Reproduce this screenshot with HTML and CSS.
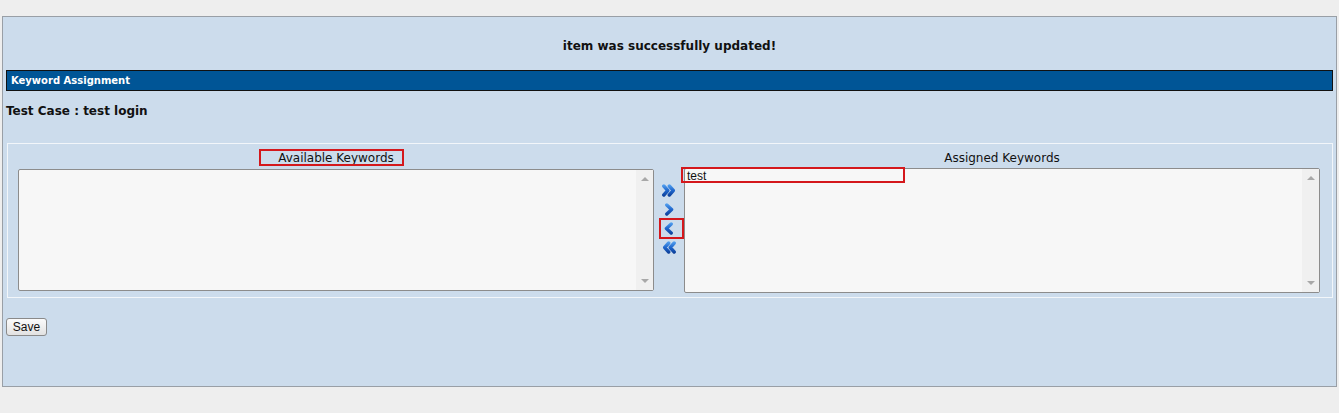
FILE: index.html
```html
<!DOCTYPE html>
<html>
<head>
<meta charset="utf-8">
<link rel="stylesheet" href="styles.css">
</head>
<body>
<div class="page">
  <div class="message">item was successfully updated!</div>
  <div class="bar">Keyword Assignment</div>
  <div class="tc">Test Case : test login</div>
  <div class="box">
    <div class="labels">
      <div class="lab lab-left">Available Keywords<span class="mark mark-label"></span></div>
      <div class="lab-gap"></div>
      <div class="lab">Assigned Keywords</div>
    </div>
    <div class="row">
      <div class="sel sel-left">
        <div class="opts"></div>
        <div class="sb"><span class="up"></span><span class="dn"></span></div>
      </div>
      <div class="arrows">
        <svg class="ar" width="16" height="13" viewBox="0 0 16 13"><defs><linearGradient id="g1" x1="0" y1="0" x2="0" y2="13" gradientUnits="userSpaceOnUse"><stop offset="0" stop-color="#5aa8f4"/><stop offset="0.5" stop-color="#1f66cc"/><stop offset="1" stop-color="#0a3a92"/></linearGradient></defs><path d="M2.8 2 L6.8 6.5 L2.8 11 M8.3 2 L12.3 6.5 L8.3 11" fill="none" stroke="url(#g1)" stroke-width="3.4" stroke-linejoin="round" stroke-linecap="round"/></svg>
        <svg class="ar" width="16" height="13" viewBox="0 0 16 13"><path d="M5.8 2 L10.6 6.5 L5.8 11" fill="none" stroke="url(#g1)" stroke-width="3.4" stroke-linejoin="round" stroke-linecap="round"/></svg>
        <div class="arbox"><svg class="ar" width="16" height="13" viewBox="0 0 16 13"><path d="M10.2 2 L5.4 6.5 L10.2 11" fill="none" stroke="url(#g1)" stroke-width="3.4" stroke-linejoin="round" stroke-linecap="round"/></svg><span class="mark mark-arrow"></span></div>
        <svg class="ar" width="16" height="13" viewBox="0 0 16 13"><path d="M13.2 2 L9.2 6.5 L13.2 11 M7.7 2 L3.7 6.5 L7.7 11" fill="none" stroke="url(#g1)" stroke-width="3.4" stroke-linejoin="round" stroke-linecap="round"/></svg>
      </div>
      <div class="sel sel-right">
        <div class="opts"><div class="opt">test</div></div>
        <div class="sb"><span class="up"></span><span class="dn"></span></div>
        <span class="mark mark-opt"></span>
      </div>
    </div>
  </div>
  <div class="actions"><button class="btn">Save</button></div>
</div>
</body>
</html>
```

FILE: styles.css
```css
html, body {
  margin: 0;
  padding: 0;
  background: #eeeeee;
}
.page {
  margin: 16px 2px 0 2px;
  width: 1333px;
  height: 369px;
  background: #ccdcec;
  border: 1px solid #999fa6;
  font-family: "DejaVu Sans", Verdana, sans-serif;
  color: #111;
}
.message {
  text-align: center;
  font-weight: bold;
  font-size: 12px;
  padding-top: 22px;
  height: 31px;
  line-height: 15px;
}
.bar {
  margin: 0 3px;
  height: 19px;
  border: 1px solid #111;
  background: #005596;
  color: #fff;
  font-weight: bold;
  font-size: 10px;
  line-height: 19px;
  padding-left: 4px;
}
.tc {
  font-weight: bold;
  font-size: 12px;
  margin: 12px 0 0 3px;
  line-height: 16px;
  height: 16px;
}
.box {
  margin: 24px 3px 0 4px;
  height: 153px;
  border: 1px solid #f2f6fa;
  position: relative;
}
.labels {
  display: flex;
  padding-left: 10px;
  margin-top: 7px;
  height: 18px;
  font-size: 12px;
  line-height: 14px;
}
.lab {
  width: 636px;
  text-align: center;
  position: relative;
}
.lab-gap {
  width: 30px;
}
.row {
  display: flex;
  padding-left: 10px;
  align-items: flex-start;
}
.sel {
  position: relative;
  width: 634px;
  background: #f7f7f7;
  border: 1px solid #8c8c8c;
  border-radius: 2px;
  display: flex;
}
.sel-left {
  height: 120px;
}
.sel-right {
  height: 123px;
  margin-top: -1px;
}
.opts {
  flex: 1;
  font-family: "Liberation Sans", Arial, sans-serif;
  font-size: 12px;
}
.opt {
  padding-left: 2px;
  line-height: 14px;
}
.sb {
  width: 17px;
  background: #f0f0f0;
  position: relative;
}
.up, .dn {
  position: absolute;
  left: 5px;
  width: 0;
  height: 0;
  border-left: 4px solid transparent;
  border-right: 4px solid transparent;
}
.up {
  top: 7px;
  border-bottom: 4px solid #a8a8a8;
}
.dn {
  bottom: 7px;
  border-top: 4px solid #a8a8a8;
}
.arrows {
  width: 30px;
  display: flex;
  flex-direction: column;
  align-items: center;
  padding-top: 15px;
  gap: 6px;
}
.ar {
  display: block;
}
.arbox {
  position: relative;
}
.mark {
  position: absolute;
  border: 2px solid #d4181c;
  box-sizing: border-box;
  pointer-events: none;
}
.mark-label {
  top: -2px;
  width: 145px;
  height: 17px;
}
.lab-left .mark-label {
  left: 241px;
}
.mark-arrow {
  left: -2px;
  top: -4px;
  width: 25px;
  height: 21px;
}
.mark-opt {
  left: -4px;
  top: -2px;
  width: 224px;
  height: 16px;
}
.actions {
  margin: 18px 0 0 3px;
}
.btn {
  font-family: "Liberation Sans", Arial, sans-serif;
  font-size: 12px;
  height: 18px;
  width: 41px;
  padding: 0;
  border: 1px solid #8a8a8a;
  border-radius: 3px;
  background: linear-gradient(#fbfbfb, #e2e2e2);
  color: #111;
}
```
